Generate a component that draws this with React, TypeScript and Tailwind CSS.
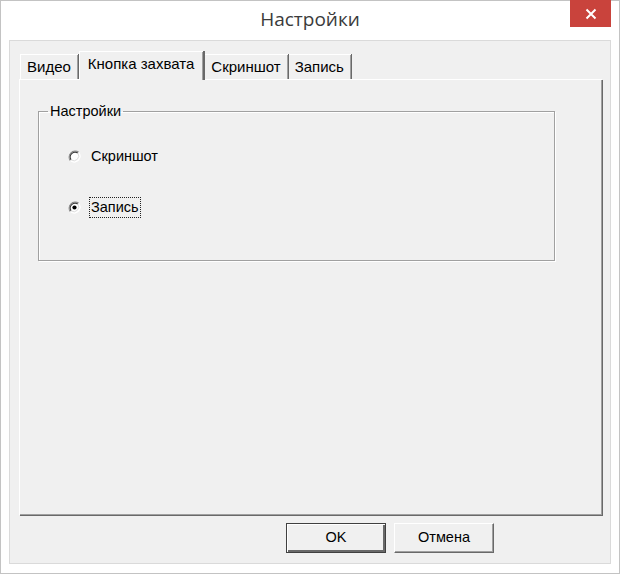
import { useState } from "react";

const TABS = ["Видео", "Кнопка захвата", "Скриншот", "Запись"];

const UI_FONT = "font-['Liberation_Sans',Arial,sans-serif]";

function RadioDot({ checked }: { checked: boolean }) {
  return (
    <svg width="13" height="13" viewBox="0 0 13 13" className="shrink-0">
      <circle cx="6.5" cy="6.5" r="6" fill="#ffffff" />
      {/* top-left shadow arcs */}
      <path d="M2.3 10.7 A6 6 0 0 1 10.7 2.3" fill="none" stroke="#8a8a8a" strokeWidth="1.1" />
      <path d="M3.1 9.9 A4.9 4.9 0 0 1 9.9 3.1" fill="none" stroke="#3c3c3c" strokeWidth="1.1" />
      {/* bottom-right highlight */}
      <path d="M10.7 2.3 A6 6 0 0 1 2.3 10.7" fill="none" stroke="#ffffff" strokeWidth="1" />
      <path d="M9.9 3.1 A4.9 4.9 0 0 1 3.1 9.9" fill="none" stroke="#dcdcdc" strokeWidth="1" />
      {checked && <circle cx="6.5" cy="6.5" r="2.1" fill="#000000" />}
    </svg>
  );
}

function Radio({
  label,
  checked,
  focused,
  onSelect,
}: {
  label: string;
  checked: boolean;
  focused?: boolean;
  onSelect: () => void;
}) {
  return (
    <div onClick={onSelect} className="flex items-center gap-[8px] cursor-default">
      <RadioDot checked={checked} />
      <span
        className={
          focused
            ? "border border-dotted border-[#222] px-[1px] leading-[19px] text-[14.5px] text-black"
            : "border border-transparent px-[1px] leading-[19px] text-[14.5px] text-black"
        }
      >
        {label}
      </span>
    </div>
  );
}

function Tab({
  label,
  active,
  first,
  onSelect,
}: {
  label: string;
  active: boolean;
  first?: boolean;
  onSelect: () => void;
}) {
  if (active) {
    return (
      <div
        onClick={onSelect}
        className="relative z-10 -mb-[1px] h-[29px] flex items-center pl-[8px] pr-[9px] pb-[3px] bg-[#f0f0f0] border-t border-l border-white shadow-[inset_-1px_0_0_#a0a0a0,2px_0_0_#696969] mr-[2px] text-[15px] text-black"
      >
        {label}
      </div>
    );
  }
  return (
    <div
      onClick={onSelect}
      className={
        (first ? "border-l " : "") +
        "self-end h-[25px] flex items-center pl-[6px] pr-[7px] bg-[#f0f0f0] border-t border-white shadow-[inset_-1px_0_0_#a0a0a0,1px_0_0_#696969] mr-[1px] text-[15px] text-black"
      }
    >
      {label}
    </div>
  );
}

export default function App() {
  const [tab, setTab] = useState(1);
  const [mode, setMode] = useState<"shot" | "rec">("rec");

  return (
    <div className={`w-[620px] h-[574px] bg-white border border-[#c3c3c3] flex flex-col ${UI_FONT}`}>
      {/* Title bar */}
      <div className="relative h-[39px] shrink-0 flex items-center justify-center">
        <span className="font-['Open_Sans','Noto_Sans',sans-serif] text-[19px] text-[#3b3b3b] -mt-[2px]">
          Настройки
        </span>
        <button
          type="button"
          className="absolute right-[8px] -top-[1px] w-[41px] h-[27px] bg-[#c9433c] flex items-center justify-center"
        >
          <svg width="12" height="12" viewBox="0 0 12 12">
            <path d="M1.5 1.5 L10.5 10.5 M10.5 1.5 L1.5 10.5" stroke="#ffffff" strokeWidth="2" />
          </svg>
        </button>
      </div>

      {/* Client area */}
      <div className="mx-[8px] mb-[9px] flex-1 flex flex-col bg-[#f0f0f0] border border-[#dadada]">
        {/* Tabs */}
        <div className="h-[38px] pl-[10px] pt-[9px] flex items-end shrink-0">
          {TABS.map((t, i) => (
            <Tab key={t} label={t} active={i === tab} first={i === 0} onSelect={() => setTab(i)} />
          ))}
        </div>

        {/* Tab panel */}
        <div className="ml-[9px] mr-[8px] h-[436px] shrink-0 border-t border-l border-white shadow-[inset_-1px_-1px_0_#a0a0a0,1px_1px_0_#696969] pl-[18px] pt-[23px]">
          <fieldset className="w-[517px] h-[158px] border border-[#a0a0a0] shadow-[1px_1px_0_#ffffff,inset_1px_1px_0_#ffffff] p-0 m-0">
            <legend className="px-[2px] ml-[9px] text-[14.5px] text-black leading-[16px]">Настройки</legend>
            <div className="flex flex-col gap-[30px] pl-[29px] pt-[27px]">
              <Radio label="Скриншот" checked={mode === "shot"} onSelect={() => setMode("shot")} />
              <Radio label="Запись" checked={mode === "rec"} focused onSelect={() => setMode("rec")} />
            </div>
          </fieldset>
        </div>

        {/* Buttons */}
        <div className="flex justify-end gap-[8px] pr-[116px] mt-[8px]">
          <button
            type="button"
            className="w-[100px] h-[30px] border border-[#404040] bg-[#f0f0f0] shadow-[inset_1px_1px_0_#ffffff,inset_-2px_-2px_0_#696969] text-[14.5px] text-black"
          >
            OK
          </button>
          <button
            type="button"
            className="w-[100px] h-[30px] border-t border-l border-white border-b border-r border-b-[#696969] border-r-[#696969] bg-[#f0f0f0] shadow-[inset_-1px_-1px_0_#a0a0a0] text-[14.5px] text-black"
          >
            Отмена
          </button>
        </div>
      </div>
    </div>
  );
}
